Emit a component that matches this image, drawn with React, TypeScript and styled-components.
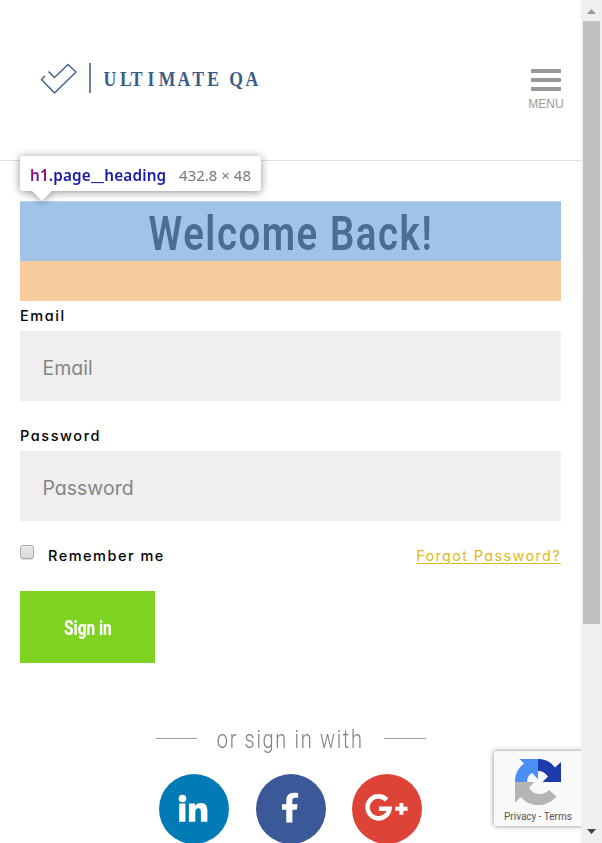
import React from 'react';
import styled, { createGlobalStyle } from 'styled-components';

const GlobalStyle = createGlobalStyle`
  * { box-sizing: border-box; }
  html, body { margin: 0; padding: 0; background: #fff; overflow: hidden; }
  body { font-family: "Inter", "Lato", sans-serif; color: #000; }
`;

const Window = styled.div`
  display: flex;
  width: 602px;
  height: 843px;
  overflow: hidden;
  position: relative;
`;

const Page = styled.div`
  width: 581px;
  height: 843px;
  overflow: hidden;
  position: relative;
`;

const Header = styled.header`
  height: 161px;
  border-bottom: 1px solid #dedede;
  display: flex;
  justify-content: space-between;
  padding: 56px 17px 0 36px;
`;

const Logo = styled.svg`
  display: block;
  width: 230px;
  height: 44px;
`;

const MenuButton = styled.button`
  border: 0;
  padding: 13px 0 0;
  background: none;
  width: 36px;
  height: 60px;
  display: flex;
  flex-direction: column;
  align-items: center;
  gap: 5px;
`;

const Bar = styled.span`
  width: 30px;
  height: 4px;
  background: #999;
`;

const MenuLabel = styled.span`
  font: 12px/14px "Liberation Sans", Arial, sans-serif;
  color: #999;
  margin-top: 1px;
`;

const Main = styled.main`
  padding: 40px 20px 0;
`;

const Heading = styled.h1`
  margin: 0;
  height: 60px;
  background: #a0c4e8;
  border-top: 1px solid #bfd6ed;
  color: #4a6d92;
  font: 600 49px/64px "Roboto", sans-serif;
  letter-spacing: 2px;
  text-align: center;
`;

const MarginBand = styled.div`
  height: 40px;
  background: #f8cb9c;
`;

const Squeeze = styled.span<{ $x: number }>`
  display: inline-block;
  white-space: nowrap;
  transform: scaleX(${(p) => p.$x});
`;

const Field = styled.label<{ $gap: number }>`
  display: block;
  margin-bottom: ${(p) => p.$gap}px;
`;

const FieldName = styled.span`
  display: block;
  height: 30px;
  font: 500 14.5px/29px "Inter", sans-serif;
  font-feature-settings: "cv11";
  letter-spacing: 1.55px;
`;

const Input = styled.input`
  display: block;
  width: 100%;
  height: 70px;
  border: 0;
  border-radius: 0;
  outline: 0;
  padding: 3px 22.5px 0;
  background: #efefef;
  font: 400 19.5px "Inter", sans-serif;
  font-feature-settings: "cv11";
  &::placeholder { color: #858585; opacity: 1; }
`;

const Options = styled.div`
  height: 70px;
  display: flex;
  justify-content: space-between;
  padding-top: 24px;
  font: 14.5px/22px "Inter", sans-serif;
  font-feature-settings: "cv11";
`;

const Remember = styled.label`
  display: flex;
  font-weight: 500;
  letter-spacing: 1.5px;
`;

const Checkbox = styled.span`
  width: 14px;
  height: 14px;
  border: 1px solid #aaa;
  border-radius: 3px;
  background: linear-gradient(#e8e8e8, #d9d9d9);
  box-shadow: inset 0 1px 1px #eee, 0 1px 0 #ddd;
  margin-right: 14px;
`;

const Forgot = styled.a`
  color: #e0b81c;
  letter-spacing: 1.33px;
  text-decoration: underline;
  text-underline-offset: 2px;
`;

const SignIn = styled.button`
  display: block;
  width: 135px;
  height: 72px;
  border: 0;
  padding: 2px 0 0;
  background: #7ed321;
  color: #fff;
  font: 800 20.5px "Roboto", sans-serif;
`;

const Divider = styled.div`
  display: flex;
  align-items: center;
  justify-content: space-between;
  width: 270px;
  height: 40px;
  margin: 56px auto 0;
  color: #808080;
  font: 300 26.5px/42px "Roboto", sans-serif;
  letter-spacing: 2.2px;
`;

const Rule = styled.span`
  width: 41.5px;
  height: 1px;
  background: #999;
  flex: none;
  margin-top: -1px;
`;

const DividerText = styled.span`
  width: 148px;
  display: flex;
  justify-content: center;
`;

const Socials = styled.div`
  display: flex;
  justify-content: center;
  gap: 26.5px;
  margin-top: 15px;
`;

const Social = styled.a<{ $color: string }>`
  width: 70px;
  height: 70px;
  border-radius: 50%;
  background: ${(p) => p.$color};
  flex: none;
  svg { display: block; width: 70px; height: 70px; }
`;

const Tooltip = styled.div`
  position: absolute;
  left: 20px;
  top: 156px;
  width: 241px;
  height: 35px;
  border-radius: 3px;
  background: #fff;
  filter: drop-shadow(0 1px 4px rgba(0, 0, 0, 0.45));
  display: flex;
  justify-content: space-between;
  padding: 0 10px;
  font: 15px/38px "Noto Sans", sans-serif;
  white-space: nowrap;
  &::after {
    content: "";
    position: absolute;
    left: 12px;
    top: 35px;
    border: 10px solid transparent;
    border-top-color: #fff;
    border-bottom: 0;
  }
`;

const Selector = styled.b`
  width: 137px;
  font-size: 15.3px;
  font-weight: 600;
  letter-spacing: 0.17px;
  color: #1a1aa6;
`;

const Tag = styled.span`
  color: #881280;
`;

const Size = styled.span`
  width: 73px;
  display: flex;
  justify-content: flex-end;
  color: #777;
`;

const Captcha = styled.aside`
  position: absolute;
  left: 494px;
  top: 751px;
  width: 100px;
  height: 75px;
  border-radius: 2px;
  background: #f9f9f9;
  box-shadow: 0 0 5px #808080;
  padding: 6px 0 0 10px;
  font: 10px/14px "Roboto", sans-serif;
  color: #555;
  svg { display: block; width: 48px; height: 48px; margin: 0 0 5px 10px; }
`;

const Scrollbar = styled.div`
  width: 21px;
  height: 843px;
  background: #f0f0f0;
  display: flex;
  flex-direction: column;
  align-items: center;
  svg { display: block; width: 21px; height: 21px; flex: none; }
`;

const Thumb = styled.div`
  width: 17px;
  height: 603px;
  background: #c1c1c1;
  margin-bottom: auto;
`;

export default function App() {
  return (
    <>
      <GlobalStyle />
      <Window>
        <Page>
          <Header>
            <Logo viewBox="36 56 230 44" aria-label="Ultimate QA">
              <path
                d="M45 76 L41.5 79.5 L54.5 93 L76 72 L68 64.5 L54.5 77.5 L48.5 71.5"
                fill="none"
                stroke="#42638d"
                strokeWidth="1.5"
                strokeLinejoin="round"
              />
              <path d="M90 63V93" stroke="#42638d" strokeWidth="1.6" />
              <text
                transform="scale(0.86 1)"
                x="120.5 139.5 152 171.5 184.500 206.500 223.500 241 266.500 285.500"
                y="86"
                fill="#3b5c89"
                fontFamily="Liberation Serif, serif"
                fontWeight="700"
                fontSize="20.5"
              >
                ULTIMATEQA
              </text>
            </Logo>
            <MenuButton>
              <Bar />
              <Bar />
              <Bar />
              <MenuLabel>MENU</MenuLabel>
            </MenuButton>
          </Header>
          <Main>
            <Heading>
              <Squeeze $x={0.783}>Welcome Back!</Squeeze>
            </Heading>
            <MarginBand />
            <Field $gap={20}>
              <FieldName>Email</FieldName>
              <Input placeholder="Email" />
            </Field>
            <Field $gap={0}>
              <FieldName>Password</FieldName>
              <Input type="password" placeholder="Password" />
            </Field>
            <Options>
              <Remember>
                <Checkbox />
                Remember me
              </Remember>
              <Forgot>Forgot Password?</Forgot>
            </Options>
            <SignIn>
              <Squeeze $x={0.75}>Sign in</Squeeze>
            </SignIn>
            <Divider>
              <Rule />
              <DividerText>
                <Squeeze $x={0.755}>or sign in with</Squeeze>
              </DividerText>
              <Rule />
            </Divider>
            <Socials>
              <Social $color="#007bb6" aria-label="LinkedIn">
                <svg viewBox="0 0 70 70" fill="#fff">
                  <circle cx="23.5" cy="24.5" r="3.8" />
                  <path d="M20.2 29.5h6.200v18.3h-6.200zM29.900 29.5h6.1v2.6c1.1-1.9 3-3.1 5.6-3.1 5.3 0 6.8 3.5 6.8 8.4v10.4h-6.5v-9.6c0-2.4-.4-4-2.6-4-2.3 0-3 1.7-3 4v9.6h-6.4z" />
                </svg>
              </Social>
              <Social $color="#3b5998" aria-label="Facebook">
                <svg viewBox="0 0 70 70" fill="#fff">
                  <path d="M30.3 48.5V35.8H26v-5.5h4.3v-4c0-4.6 2.7-7.5 7.5-7.5 1.8 0 3.5.1 4.3.3v4.7h-3c-2.2 0-2.7 1.1-2.7 2.8v3.7h5.2l-.8 5.5h-4.4v12.7z" />
                </svg>
              </Social>
              <Social $color="#dd4337" aria-label="Google Plus">
                <svg viewBox="0 0 70 70">
                  <path
                    d="M34.7 25.9A11 11 0 1 0 37.500 34.8H27"
                    fill="none"
                    stroke="#fff"
                    strokeWidth="4.6"
                  />
                  <path d="M43.2 34.8h12.4M49.4 29v11.700" stroke="#fff" strokeWidth="4" />
                </svg>
              </Social>
            </Socials>
          </Main>
          <Captcha>
            <svg viewBox="514 757 48 48">
              <path fill="#4a90f4" d="M538 759H519.500l4.500 4.500C518 768 515 774 515 782h12c0-4 2-7.500 5-9l6 6z" />
              <path fill="#1c3aa9" d="M538 759c7 0 13 3 17 8.500l6-5.500v20h-18.500l5.500-5.500C545.500 773 542.500 771 538 771z" />
              <path fill="#b5b5b5" d="M515 782h19.500l-5.500 5.500C533 795 543 796.500 549 790l7.500 6.500C547 808 529 808 521 797l-6 5.500z" />
            </svg>
            Privacy - Terms
          </Captcha>
        </Page>
        <Scrollbar>
          <svg viewBox="0 0 21 21">
            <path d="M6 14l4.500-5 4.500 5z" fill="#999" />
          </svg>
          <Thumb />
          <svg viewBox="0 0 21 21">
            <path d="M6 7l4.500 5 4.500-5z" fill="#444" />
          </svg>
        </Scrollbar>
        <Tooltip>
          <Selector>
            <Tag>h1</Tag>.page__heading
          </Selector>
          <Size>432.8 × 48</Size>
        </Tooltip>
      </Window>
    </>
  );
}
